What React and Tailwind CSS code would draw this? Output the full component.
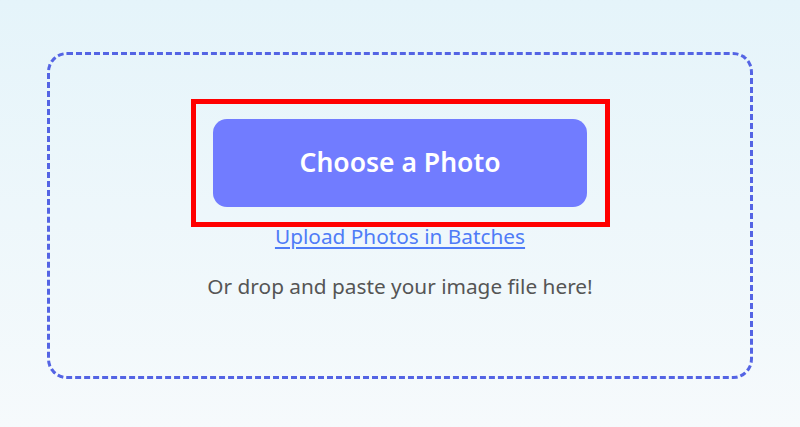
export default function App() {
  return (
    <div
      className="h-[427px] w-[800px] overflow-hidden bg-gradient-to-b from-[#e5f4fa] to-[#f6fafc] pt-[52px] px-[47px]"
      style={{ fontFamily: '"Noto Sans", "Open Sans", sans-serif' }}
    >
      {/* Drop zone */}
      <div className="h-[327px] rounded-[20px] border-[3px] border-dashed border-[#5464e4] flex flex-col items-center pt-[44px]">
        <div className="w-[419px] h-[128px] border-[5px] border-[#ff0000] flex items-center justify-center">
          <button className="w-[374px] h-[88px] rounded-[14px] bg-[#717cff] text-white text-[26.5px] font-semibold">
            Choose a Photo
          </button>
        </div>
        <a
          href="#"
          className="-mt-[5px] text-[20.8px] leading-[28px] text-[#4f7cf7] underline underline-offset-[3px]"
        >
          Upload Photos in Batches
        </a>
        <p className="mt-[22px] text-[20.8px] leading-[28px] text-[#555555]">
          Or drop and paste your image file here!
        </p>
      </div>
    </div>
  );
}
